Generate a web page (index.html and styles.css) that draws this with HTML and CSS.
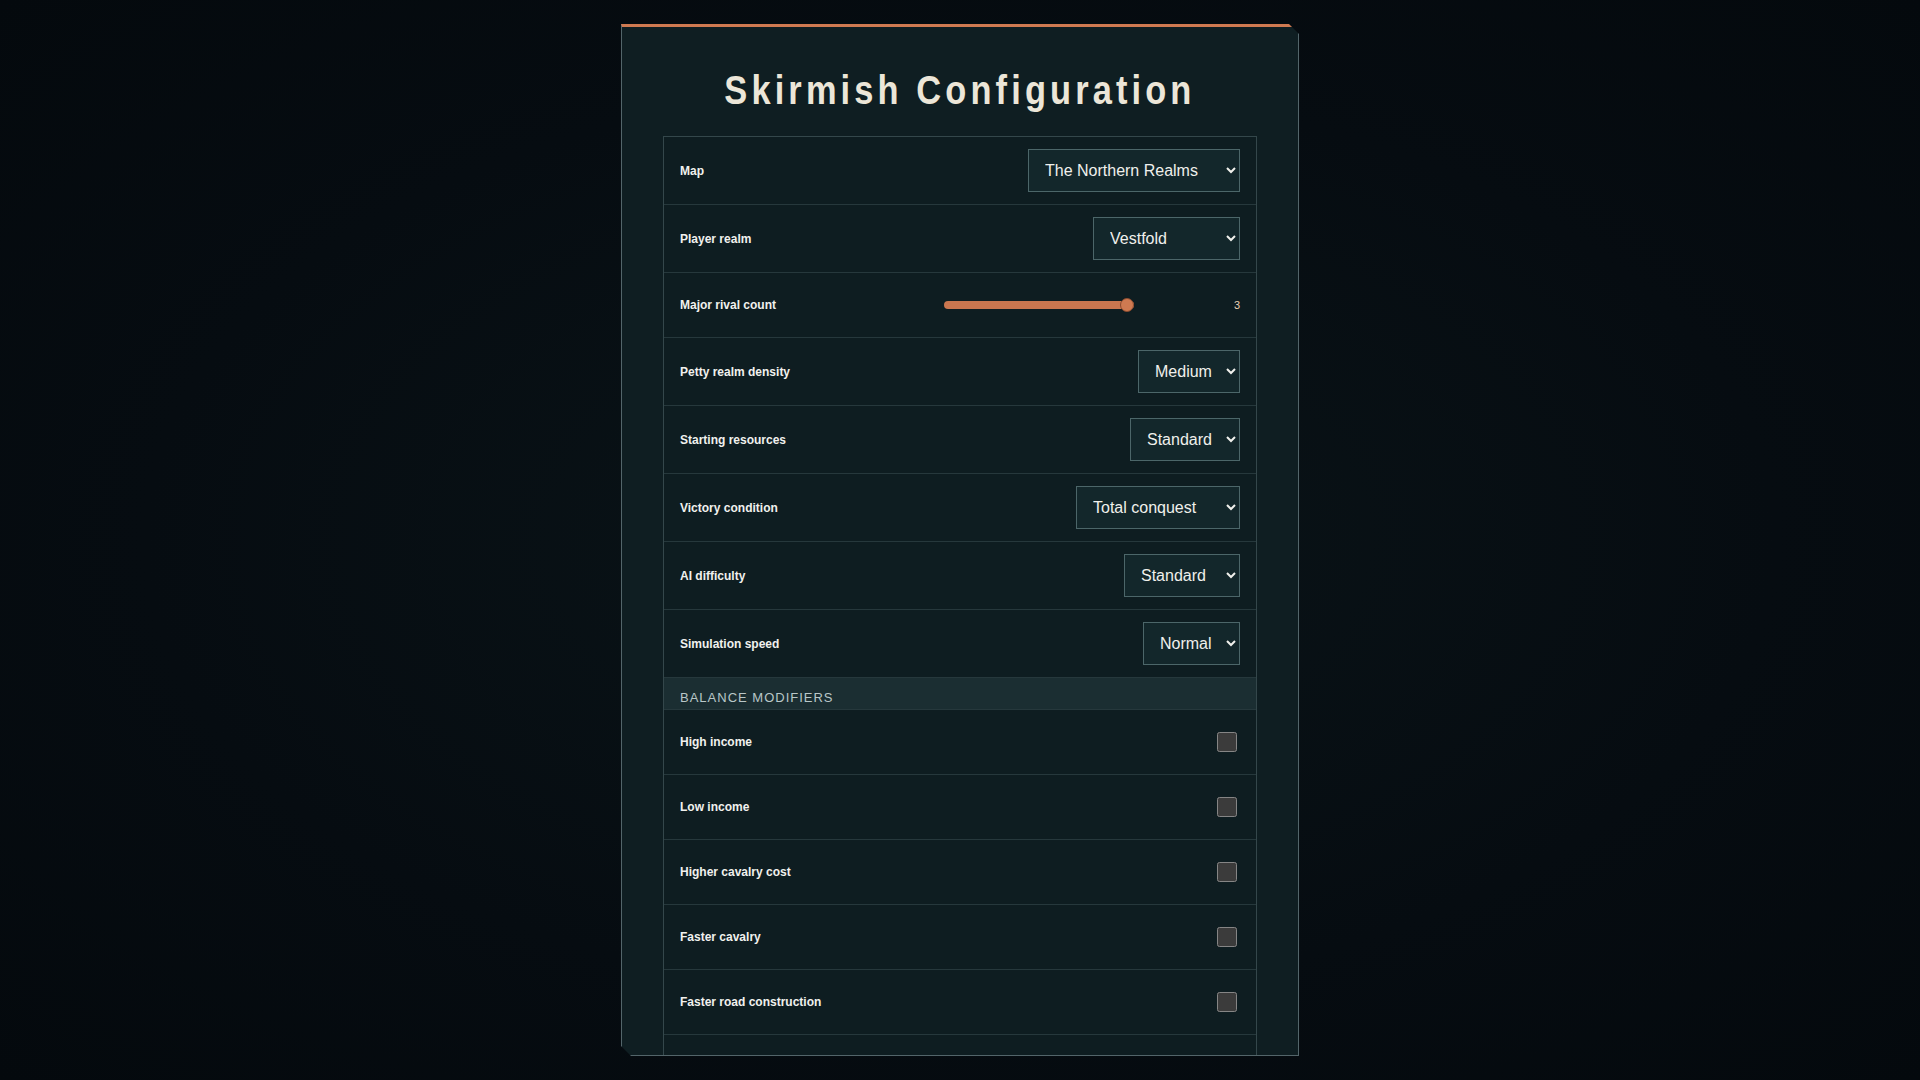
FILE: index.html
```html
<!DOCTYPE html>
<html lang="en">
<head>
    <meta charset="UTF-8">
    <meta name="viewport" content="width=device-width, initial-scale=1.0">
    <title>Skirmish Configuration</title>
    <link rel="stylesheet" href="styles.css">
</head>
<body>
    <div class="panel">
        <h1 class="panel-title"><span>Skirmish Configuration</span></h1>

        <div class="settings">
            <div class="row">
                <label for="map">Map</label>
                <select id="map">
                    <option selected>The Northern Realms</option>
                    <option>The Western Kingdoms</option>
                    <option>Isles of the West</option>
                </select>
            </div>
            <div class="row">
                <label for="realm">Player realm</label>
                <select id="realm">
                    <option selected>Vestfold</option>
                    <option>Dublin Vikings</option>
                    <option>Northumbria</option>
                    <option>Wessex</option>
                </select>
            </div>
            <div class="row">
                <label for="rivals">Major rival count</label>
                <div class="range-wrap">
                    <input type="range" id="rivals" min="1" max="3" value="3">
                    <output for="rivals">3</output>
                </div>
            </div>
            <div class="row">
                <label for="petty">Petty realm density</label>
                <select id="petty">
                    <option>None</option>
                    <option>Low</option>
                    <option selected>Medium</option>
                    <option>High</option>
                </select>
            </div>
            <div class="row">
                <label for="resources">Starting resources</label>
                <select id="resources">
                    <option>Low</option>
                    <option selected>Standard</option>
                    <option>High</option>
                </select>
            </div>
            <div class="row">
                <label for="victory">Victory condition</label>
                <select id="victory">
                    <option selected>Total conquest</option>
                    <option>Territorial control</option>
                    <option>Prestige</option>
                </select>
            </div>
            <div class="row">
                <label for="ai">AI difficulty</label>
                <select id="ai">
                    <option>Easy</option>
                    <option selected>Standard</option>
                    <option>Hardened</option>
                </select>
            </div>
            <div class="row">
                <label for="speed">Simulation speed</label>
                <select id="speed">
                    <option>Slow</option>
                    <option selected>Normal</option>
                    <option>Fast</option>
                </select>
            </div>

            <!-- Balance modifiers -->
            <div class="group-head">Balance modifiers</div>
            <div class="row">
                <label for="mod1">High income</label>
                <input type="checkbox" id="mod1">
            </div>
            <div class="row">
                <label for="mod2">Low income</label>
                <input type="checkbox" id="mod2">
            </div>
            <div class="row">
                <label for="mod3">Higher cavalry cost</label>
                <input type="checkbox" id="mod3">
            </div>
            <div class="row">
                <label for="mod4">Faster cavalry</label>
                <input type="checkbox" id="mod4">
            </div>
            <div class="row">
                <label for="mod5">Faster road construction</label>
                <input type="checkbox" id="mod5">
            </div>
            <div class="row">
                <label for="mod6">Fortified capitals</label>
                <input type="checkbox" id="mod6">
            </div>
        </div>
    </div>
</body>
</html>
```

FILE: styles.css
```css
html {
    color-scheme: dark;
}
body {
    margin: 0;
    height: 100vh;
    overflow: hidden;
    font-family: "Liberation Sans", Arial, sans-serif;
    background-color: #060c11;
    background-image: radial-gradient(ellipse at 50% 50%, #0a1418 0%, #060c11 60%, #04090d 100%);
}
.panel {
    box-sizing: border-box;
    width: 678px;
    height: calc(100vh - 48px);
    margin: 24px auto;
    padding: 39px 41px 0;
    background: #0f1e22;
    border: 1px solid #53656a;
    border-top: 3px solid #cf7a51;
    overflow-y: auto;
    scrollbar-width: none;
    clip-path: polygon(0 0, calc(100% - 10px) 0, 100% 10px, 100% 100%, 10px 100%, 0 calc(100% - 10px));
}
.panel-title {
    margin: 0 0 22px;
    text-align: center;
    font-size: 40px;
    line-height: 48px;
    font-weight: bold;
    letter-spacing: 0.12em;
    color: #ece6d8;
}
.panel-title span {
    display: inline-block;
    transform: scaleX(0.86);
}
.settings {
    border: 1px solid #34474b;
    background: #0e1d21;
}
.row {
    box-sizing: border-box;
    min-height: 65px;
    padding: 12px 16px;
    display: flex;
    align-items: center;
    justify-content: space-between;
    border-bottom: 1px solid #26383c;
}
.row label {
    font-size: 12px;
    font-weight: bold;
    color: #f1f1ee;
}
select {
    height: 43px;
    padding: 0 11px 0 12px;
    font-family: "Liberation Sans", Arial, sans-serif;
    font-size: 16px;
    color: #f0f0ec;
    background: #13272b;
    border: 1px solid #4c6669;
    border-radius: 0;
}
input[type="checkbox"] {
    width: 20px;
    height: 20px;
    margin: 3px;
}
.range-wrap {
    display: flex;
    align-items: center;
}
.range-wrap input[type="range"] {
    -webkit-appearance: none;
    appearance: none;
    width: 190px;
    height: 8px;
    margin: 0;
    border-radius: 4px;
    background: #c9764f;
}
.range-wrap input[type="range"]::-webkit-slider-thumb {
    -webkit-appearance: none;
    width: 14px;
    height: 14px;
    border-radius: 50%;
    background: #cf7a51;
    border: 1px solid #8a4a2e;
}
.range-wrap output {
    min-width: 96px;
    margin-left: 10px;
    text-align: right;
    font-size: 11px;
    color: #ead0b4;
}
.group-head {
    padding: 13px 16px 4px;
    font-size: 13px;
    line-height: 14px;
    letter-spacing: 1px;
    text-transform: uppercase;
    color: #b9c7c8;
    background: #1b2e32;
    border-bottom: 1px solid #26383c;
}
```
